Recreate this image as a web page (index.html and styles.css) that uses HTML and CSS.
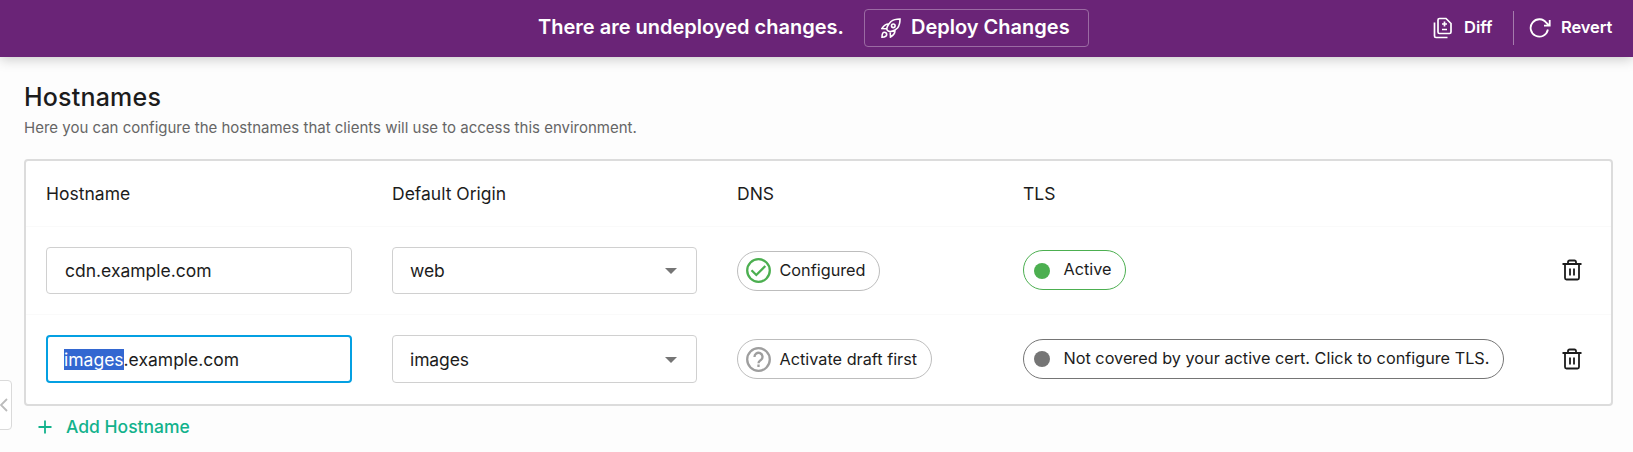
FILE: index.html
```html
<!DOCTYPE html>
<html lang="en">
<head>
<meta charset="utf-8">
<title>Hostnames</title>
<link rel="stylesheet" href="styles.css">
</head>
<body>
<header class="banner">
  <div class="banner-main">
    <span class="banner-text">There are undeployed changes.</span>
    <button class="deploy">
      <svg class="rocket" viewBox="0 0 20 20"><path d="M6.500 12.500C4.500 10.500 7.500 6 10 3.500C12.500 1.500 16 1 19 1C19 4 18.500 7.500 16.500 10C14 12.500 9 15 6.500 12.500zM7.500 6C4 6 2.500 8 1 10.500L5.500 10.800M14 12.500C14 16 12 17.500 9.500 19L9.200 14.500"/><circle cx="12.300" cy="7.800" r="1.800"/><path d="M1 19.200C1 16.500 1.500 14.300 3.300 14.300C4.700 14.300 5.700 15.300 5.700 16.600C5.700 18.500 3.500 19.200 1 19.200z"/></svg>
      <span class="deploy-label">Deploy Changes</span>
    </button>
  </div>
  <nav class="banner-actions">
    <a class="action diff">
      <svg class="icon-diff" viewBox="0 0 20 22"><path d="M6.500 1.500H13L18 6.500V15a1.500 1.500 0 0 1-1.500 1.500H6.500A1.500 1.500 0 0 1 5 15V3A1.500 1.500 0 0 1 6.500 1.500zM1.500 5.500V19A1.500 1.500 0 0 0 3 20.500H14.500M11.500 4.500v5M9 7h5M9 12.500h5"/></svg>
      <span>Diff</span>
    </a>
    <a class="action revert">
      <svg class="icon-revert" viewBox="0 0 22 20"><path d="M18.900 11.500A8.700 8.700 0 1 1 17.500 5L20 7.500M20.700 2V7.700H15"/></svg>
      <span>Revert</span>
    </a>
  </nav>
</header>
<main class="page">
  <h1 class="title">Hostnames</h1>
  <p class="subtitle">Here you can configure the hostnames that clients will use to access this environment.</p>
  <section class="table">
    <div class="row head"><span>Hostname</span><span>Default Origin</span><span>DNS</span><span>TLS</span></div>
    <div class="row">
      <div class="field"><span>cdn.example.com</span></div>
      <div class="field select"><span>web</span><i class="caret"></i></div>
      <div><span class="pill"><svg class="status ok" viewBox="0 0 25 25"><circle cx="12.500" cy="12.500" r="11.300"/><path d="M5.500 12.300l4.800 4.700L19.300 8"/></svg><span class="raised">Configured</span></span></div>
      <div><span class="pill tls active"><i class="dot"></i><span>Active</span></span></div>
      <svg class="trash" viewBox="0 0 20 22"><path d="M3 5.500V19a1.500 1.500 0 0 0 1.500 1.500h11A1.500 1.500 0 0 0 17 19V5.500M.5 5h19M6 5V3a1.500 1.500 0 0 1 1.500-1.500h5A1.500 1.500 0 0 1 14 3v2M8 9.500v7M12 9.500v7"/></svg>
    </div>
    <div class="row last">
      <div class="field focused"><span><mark class="sel">images</mark>.example.com</span></div>
      <div class="field select"><span>images</span><i class="caret"></i></div>
      <div><span class="pill"><svg class="status unknown" viewBox="0 0 25 25"><circle cx="12.500" cy="12.500" r="11.300"/><path d="M8.500 10a4 4 0 1 1 6.500 2.900C13.700 14 12.500 14.600 12.500 16.200M12.500 17.500v2.400"/></svg><span>Activate draft first</span></span></div>
      <div><span class="pill tls inactive"><i class="dot"></i><span>Not covered by your active cert. Click to configure TLS.</span></span></div>
      <svg class="trash" viewBox="0 0 20 22"><path d="M3 5.500V19a1.500 1.500 0 0 0 1.500 1.500h11A1.500 1.500 0 0 0 17 19V5.500M.5 5h19M6 5V3a1.500 1.500 0 0 1 1.500-1.500h5A1.500 1.500 0 0 1 14 3v2M8 9.500v7M12 9.500v7"/></svg>
    </div>
  </section>
  <a class="add"><svg class="plus" viewBox="0 0 14 14"><path d="M7 .5v13M.5 7h13"/></svg><span>Add Hostname</span></a>
</main>
<div class="drawer-tab"><svg class="chevron" viewBox="0 0 8 14"><path d="M7 1L1 7l6 6"/></svg></div>
</body>
</html>
```

FILE: styles.css
```css
* { box-sizing: border-box; }
body { margin: 0; height: 452px; overflow: hidden; background: #fdfdfd; font-family: Inter, "Liberation Sans", sans-serif; color: #1c1c1c; }
svg { fill: none; stroke: currentColor; flex: none; }

.banner { position: relative; display: flex; justify-content: center; height: 57px; padding-top: 9px; background: #6a2477; color: #fff; box-shadow: 0 2px 12px rgba(0,0,0,.22); }
.banner-main { display: flex; align-items: center; height: 38px; gap: 21px; margin-right: 6px; }
.banner-text { font-size: 20px; font-weight: 600; line-height: 24px; margin-top: -2px; width: 305px; white-space: nowrap; }
.deploy { display: flex; align-items: center; width: 225px; height: 38px; padding: 0 0 0 16px; border: 1px solid #9b6ba3; border-radius: 4px; background: none; color: inherit; font: 600 20px/24px Inter, sans-serif; gap: 10px; white-space: nowrap; }
.deploy-label { margin-top: -2px; }
.rocket { width: 20px; height: 20px; stroke-width: 1.6; }
.banner-actions { position: absolute; right: 0; top: 11px; display: flex; height: 34px; width: 200px; }
.action { display: flex; align-items: center; font-size: 16.5px; font-weight: 600; line-height: 22px; }
.action span { margin-top: -2px; }
.diff { width: 81px; gap: 11px; border-right: 1px solid #a57cac; }
.revert { padding-left: 15px; gap: 10px; }
.revert span { letter-spacing: -.1px; }
.icon-diff { width: 20px; height: 22px; stroke-width: 1.7; }
.icon-revert { width: 22px; height: 20px; stroke-width: 1.8; }

.page { padding: 26px 20px 0 24px; }
.title { margin: 0; font-size: 25px; font-weight: 500; line-height: 28px; letter-spacing: .2px; }
.subtitle { margin: 7px 0 0; font-size: 15px; line-height: 20px; color: #666; }
.table { margin-top: 21px; height: 247px; border: 2px solid #dcdcdc; border-radius: 4px; background: #fff; font-size: 17.5px; }
.row { display: grid; grid-template-columns: 306px 305px 246px 499px 20px; column-gap: 40px; height: 88px; padding-left: 20px; align-items: center; border-bottom: 1px solid #fafafa; }
.row.head { height: 66px; }
.row.last { border: 0; }
.field { display: flex; align-items: center; justify-content: space-between; height: 47px; padding: 0 19px 0 18px; border: 1px solid #d0d0d0; border-radius: 4px; }
.last .field { height: 48px; }
.select { padding-left: 17px; }
.last .select { padding-top: 1px; }
.select span { letter-spacing: -.1px; }
.field.focused { border: 2px solid #04a0e2; padding-left: 16px; padding-top: 1px; }
.sel { display: inline-block; background: #3367d1; color: #fff; line-height: 21px; }
.caret { border: 6px solid transparent; border-top-color: #757575; border-bottom: 0; }
.pill { display: inline-flex; align-items: center; height: 40px; padding: 0 13.5px 0 7.5px; gap: 9px; border: 1px solid #bdbdbd; border-radius: 20px; font-size: 16.25px; vertical-align: middle; white-space: nowrap; }
.raised { margin-top: -2px; }
.tls { padding-left: 10px; padding-right: 13.5px; gap: 13.5px; border-color: currentColor; }
.tls span { color: #1c1c1c; margin-top: -2px; }
.active { color: #4caf50; position: relative; top: -1px; }
.inactive { color: #757575; }
.dot { width: 16px; height: 16px; border-radius: 50%; background: currentColor; }
.active .dot { margin-top: 2px; }
.status { width: 25px; height: 25px; stroke-width: 2.3; }
.ok { color: #4caf50; }
.unknown { color: #9e9e9e; }
.trash { width: 20px; height: 22px; margin-top: -1px; stroke-width: 1.8; }
.last .trash { margin-top: 0; }
.add { display: flex; align-items: center; gap: 14.5px; margin-top: 10px; padding-left: 13.5px; color: #12b28c; font-size: 17.5px; font-weight: 500; line-height: 22px; }
.plus { width: 14px; height: 14px; stroke-width: 1.8; }
.drawer-tab { position: absolute; left: -8px; top: 380px; width: 20px; height: 50px; display: flex; align-items: center; padding-left: 7px; border: 1px solid #dadada; border-radius: 4px; background: #fff; color: #bbb; }
.chevron { width: 8px; height: 14px; stroke-width: 1.8; }
```
